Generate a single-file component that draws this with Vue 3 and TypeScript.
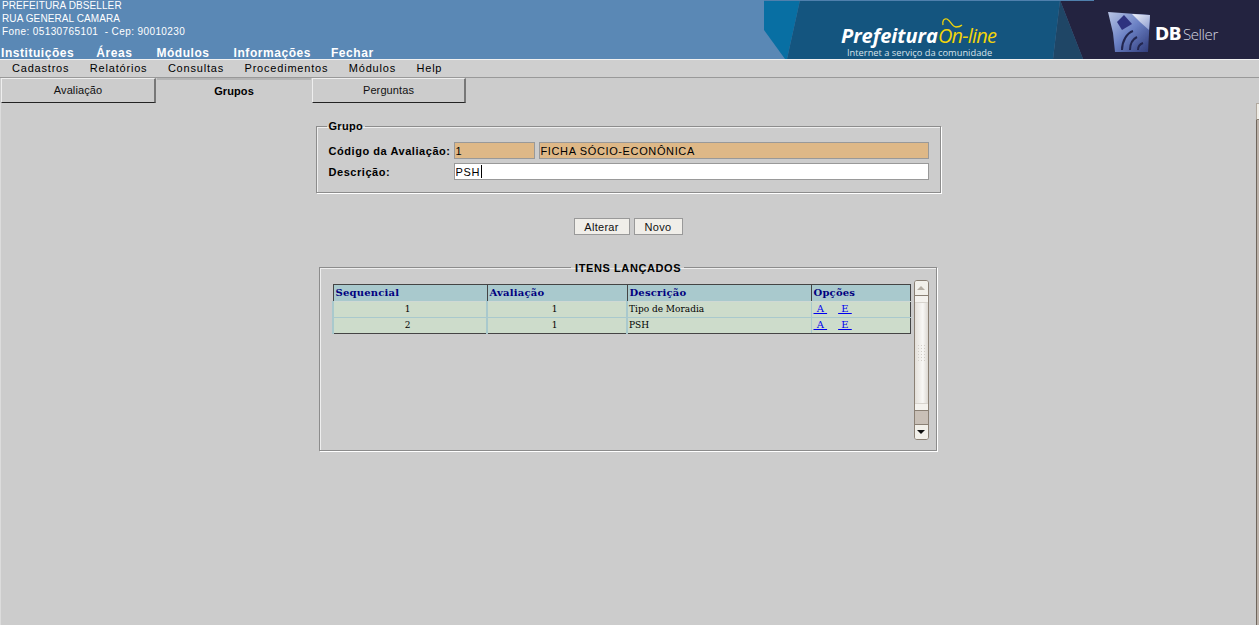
<template>
  <div class="page">
    <!-- Cabecalho -->
    <header class="topo">
      <div class="topo-info">
        <div class="dados">
          <div v-for="linha in dadosPrefeitura" :key="linha">{{ linha }}</div>
        </div>
        <nav class="nav-principal">
          <a v-for="item in navPrincipal" :key="item">{{ item }}</a>
        </nav>
      </div>
      <svg class="banner" viewBox="0 0 495 59" width="495" height="59">
        <defs>
          <linearGradient id="cubo" x1="0" y1="0" x2="1" y2="1">
            <stop offset="0" stop-color="#b9c6e6" />
            <stop offset="0.5" stop-color="#6a80c4" />
            <stop offset="1" stop-color="#2f3a78" />
          </linearGradient>
          <linearGradient id="brilho" x1="0" y1="0" x2="1" y2="1">
            <stop offset="0" stop-color="#f2f4fa" />
            <stop offset="1" stop-color="#8b9bd0" />
          </linearGradient>
          <filter id="suave"><feGaussianBlur stdDeviation="0.6" /></filter>
        </defs>
        <polygon points="0,0 36,0 23,59 21,59 0,30" fill="#086fa3" />
        <polygon points="36,0 296,0 289,59 23,59" fill="#14557f" />
        <polygon points="296,0 319,59 289,59" fill="#1f4666" />
        <polygon points="296,0 495,0 495,59 319,59" fill="#232340" />
        <rect x="0" y="0" width="330" height="1" fill="#4f80ad" />
        <text x="77" y="43" class="b-pref">Prefeitura</text>
        <text x="174" y="43" class="b-online">On-line</text>
        <path d="M179 25C178 21 180 18 183 19C187 21 188 27 192 27C195 27 197 26 198 25" fill="none" stroke="#f2d40a" stroke-width="1.3" />
        <text x="83" y="56" class="b-sub">Internet a serviço da comunidade</text>
        <g filter="url(#suave)">
          <polygon points="344,12 386,15 384,52 351,52 349,33" fill="url(#cubo)" />
          <polygon points="368,14 386,15 385,30 376,22" fill="url(#brilho)" />
          <polygon points="353,22 360,15 368,24 358,30" fill="#2f3180" />
          <path d="M358 50c0-9 5-17 11-19M366 50c0-7 3-11 7-13M374 50c0-4 2-6 5-7" fill="none" stroke="#23264f" stroke-width="2" />
        </g>
        <text x="391" y="40" class="b-db">DB</text>
        <text x="419" y="40" class="b-seller">Seller</text>
      </svg>
    </header>

    <!-- Menu -->
    <nav class="menu">
      <a v-for="item in menu" :key="item">{{ item }}</a>
    </nav>

    <!-- Abas -->
    <div class="abas">
      <button
        v-for="aba in abas"
        :key="aba"
        class="aba"
        :class="{ ativa: aba === abaAtiva }"
      >
        {{ aba }}
      </button>
    </div>

    <main class="conteudo">
      <fieldset class="grupo">
        <legend>Grupo</legend>
        <div class="linha">
          <label>Código da Avaliação:</label>
          <input class="campo leitura codigo" type="text" readonly value="1" />
          <input class="campo leitura nome" type="text" readonly value="FICHA SÓCIO-ECONÔNICA" />
        </div>
        <div class="linha">
          <label>Descrição:</label>
          <div class="campo-cursor">
            <input class="campo descricao" type="text" value="PSH" />
            <span class="cursor"></span>
          </div>
        </div>
      </fieldset>

      <div class="acoes">
        <button class="botao alterar">Alterar</button>
        <button class="botao novo">Novo</button>
      </div>

      <fieldset class="itens">
        <legend>ITENS LANÇADOS</legend>
        <div class="lista">
          <table>
            <colgroup>
              <col class="c-seq" />
              <col class="c-ava" />
              <col class="c-des" />
              <col class="c-opc" />
            </colgroup>
            <thead>
              <tr>
                <th>Sequencial</th>
                <th>Avaliação</th>
                <th>Descrição</th>
                <th>Opções</th>
              </tr>
            </thead>
            <tbody>
              <tr v-for="item in itens" :key="item.seq">
                <td class="centro">{{ item.seq }}</td>
                <td class="centro">{{ item.avaliacao }}</td>
                <td>{{ item.descricao }}</td>
                <td class="opcoes">
                  <a href="#">&nbsp;A&nbsp;</a>
                  <a href="#">&nbsp;E&nbsp;</a>
                </td>
              </tr>
            </tbody>
          </table>
          <div class="scroll">
            <div class="seta cima"><i></i></div>
            <div class="trilho">
              <div class="grip"></div>
            </div>
            <div class="resto"></div>
            <div class="seta baixo"><i></i></div>
          </div>
        </div>
      </fieldset>

      <!-- Barra de rolagem da pagina, cortada na borda direita -->
      <div class="barra-externa"><span></span></div>
    </main>
  </div>
</template>

<script setup lang="ts">
const dadosPrefeitura = [
  'PREFEITURA DBSELLER',
  'RUA GENERAL CAMARA',
  'Fone: 05130765101  - Cep: 90010230',
]
const navPrincipal = ['Instituições', 'Áreas', 'Módulos', 'Informações', 'Fechar']
const menu = ['Cadastros', 'Relatórios', 'Consultas', 'Procedimentos', 'Módulos', 'Help']
const abas = ['Avaliação', 'Grupos', 'Perguntas']
const abaAtiva = 'Grupos'
const itens = [
  { seq: 1, avaliacao: 1, descricao: 'Tipo de Moradia' },
  { seq: 2, avaliacao: 1, descricao: 'PSH' },
]
</script>

<style>
html,
body {
  background: #cccccc;
  overflow: hidden;
}
</style>

<style scoped>
.page {
  width: 1259px;
  height: 625px;
  background: #cccccc;
  font-family: "Liberation Sans", Arial, sans-serif;
  color: #000;
  overflow: hidden;
}

.topo {
  display: flex;
  justify-content: space-between;
  height: 59px;
  background: #5a88b5;
}

.topo-info {
  display: flex;
  flex-direction: column;
  justify-content: space-between;
  padding: 0 0 0 1px;
}

.dados {
  margin-top: -1px;
  padding-left: 1px;
  font-size: 10px;
  line-height: 13px;
  letter-spacing: 0.1px;
  color: #fff;
  white-space: pre;
}

.dados div:last-child {
  letter-spacing: 0.4px;
}

.nav-principal {
  display: flex;
  gap: 24px;
  margin-bottom: -1px;
  font-size: 12px;
  font-weight: 700;
  line-height: 14px;
  letter-spacing: 0.55px;
  color: #fff;
}

.nav-principal a:first-child {
  margin-right: -2px;
}

.nav-principal a:last-child {
  margin-left: -4px;
}

.banner {
  display: block;
  flex: none;
}

.b-pref {
  font-family: "Open Sans", sans-serif;
  font-size: 20px;
  font-weight: 700;
  font-style: italic;
  fill: #fff;
}

.b-online {
  font-family: "Open Sans", sans-serif;
  font-size: 20px;
  font-style: italic;
  letter-spacing: -0.8px;
  fill: #f2d40a;
}

.b-sub {
  font-family: "Open Sans", sans-serif;
  font-size: 9.3px;
  fill: #d6e2ea;
}

.b-db {
  font-family: "DejaVu Sans", sans-serif;
  font-size: 17px;
  font-weight: 700;
  letter-spacing: -0.3px;
  fill: #fff;
}

.b-seller {
  font-family: "Open Sans", sans-serif;
  font-size: 15px;
  font-weight: 300;
  letter-spacing: -0.4px;
  fill: #d5d7e0;
}

.menu {
  display: flex;
  gap: 20.5px;
  height: 19px;
  padding-left: 12px;
  box-sizing: border-box;
  background: #cfcfcf;
  border-top: 1px solid #f0f0f0;
  border-bottom: 1px solid #999;
  font-size: 11px;
  line-height: 17px;
  letter-spacing: 0.8px;
}

.abas {
  display: flex;
  gap: 1px;
  height: 25px;
  padding-left: 1px;
}

.aba {
  width: 154px;
  height: 25px;
  padding: 0 0 1px;
  background: #cccccc;
  border: none;
  border-top: 1px solid #eee;
  border-left: 1px solid #eee;
  border-right: 2px solid #777;
  border-bottom: 1px solid #222;
  font-family: inherit;
  font-size: 11px;
  letter-spacing: 0.1px;
  color: #111;
}

.aba:first-child {
  width: 155px;
}

.aba.ativa {
  border: none;
  border-top: 2px solid #b5b5b5;
  font-weight: 700;
  color: #000;
}

.conteudo {
  position: relative;
  display: flex;
  flex-direction: column;
  align-items: center;
  box-sizing: border-box;
  height: 522px;
  padding-top: 17px;
  box-shadow: inset 1px 0 0 #dcdcdc;
}

.barra-externa {
  position: absolute;
  top: 0;
  right: 0;
  bottom: 0;
  width: 3px;
  box-sizing: border-box;
  background: #bdb3aa;
  border-left: 1px solid #6e655c;
}

.barra-externa span {
  display: block;
  height: 15px;
  margin-left: -1px;
  background: #efece5;
  border-top: 1px solid #b0a89e;
  border-left: 1px solid #b0a89e;
  border-bottom: 1px solid #8a8074;
}

fieldset {
  margin: 0;
  box-sizing: border-box;
  border: 1px solid #8c8c8c;
  box-shadow: 1px 1px 0 #fff, inset 1px 1px 0 #eee;
}

legend {
  font-size: 11px;
  font-weight: 700;
  line-height: 12px;
}

.grupo {
  width: 625px;
  height: 73px;
  padding: 8px 11px 0 12px;
  margin-left: -3px;
}

.grupo legend {
  margin-left: -2px;
  padding: 0 2px;
  letter-spacing: 0.3px;
}

.linha {
  display: flex;
  align-items: center;
  height: 21px;
  gap: 4px;
}

.linha label {
  width: 121px;
  flex: none;
  font-size: 11px;
  font-weight: 700;
  letter-spacing: 0.55px;
  white-space: nowrap;
}

.campo {
  display: block;
  box-sizing: border-box;
  height: 17px;
  margin: 0;
  padding: 1px 1px 0;
  border: 1px solid #999;
  border-radius: 0;
  outline: none;
  font-family: inherit;
  font-size: 11px;
  letter-spacing: 0.63px;
  color: #000;
}

.leitura {
  background: #deb887;
}

.codigo {
  width: 81px;
}

.nome {
  width: 390px;
}

.campo-cursor {
  position: relative;
}

.descricao {
  width: 475px;
  background: #fff;
}

.cursor {
  position: absolute;
  left: 27px;
  top: 2px;
  width: 1px;
  height: 13px;
  background: #000;
}

.acoes {
  display: flex;
  gap: 4px;
  margin-top: 25px;
  margin-left: -3px;
}

.botao {
  height: 17px;
  padding: 0;
  background: #f0eee9;
  border: 1px solid #999;
  font-family: inherit;
  font-size: 11px;
  letter-spacing: 0.3px;
  color: #111;
}

.alterar {
  width: 56px;
}

.novo {
  width: 49px;
}

.itens {
  width: 618px;
  height: 191px;
  margin-top: 25px;
  margin-left: -3px;
  padding: 0 7px 0 12px;
}

.itens legend {
  margin-left: 239px;
  padding: 2px 3px 0 4px;
  letter-spacing: 0.6px;
}

.lista {
  display: flex;
  align-items: flex-start;
  gap: 3px;
  margin-top: 6px;
  text-align: left;
}

table {
  width: 577px;
  margin-top: 4px;
  table-layout: fixed;
  border-collapse: collapse;
  font-family: "DejaVu Serif", serif;
  font-size: 9px;
}

.c-seq {
  width: 154px;
}

.c-ava {
  width: 140px;
}

.c-des {
  width: 184px;
}

.c-opc {
  width: 99px;
}

th {
  height: 17px;
  padding: 0 2px 2px;
  box-sizing: border-box;
  background: #a9c9cd;
  border-top: 1px solid #444;
  border-left: 1px solid #444;
  border-bottom: 1px solid #cfd9d4;
  color: #00007f;
  font-size: 10px;
  font-weight: 700;
  letter-spacing: 0.2px;
  text-align: left;
}

th:last-child {
  border-right: 1px solid #444;
}

td {
  height: 16px;
  padding: 0 1px 2px;
  box-sizing: border-box;
  background: #cddccb;
  border-left: 2px solid #a9c9cd;
  border-right: 1px solid #a9c9cd;
  border-bottom: 1px solid #a9c9cd;
  white-space: nowrap;
}

tbody tr:last-child td {
  border-bottom: 1px solid #444;
}

.centro {
  padding-right: 6px;
  text-align: center;
}

.opcoes {
  padding-left: 2px;
  border-top: 1px solid #444;
  border-left: 1px solid #444;
  border-right: 1px solid #444;
}

.opcoes a {
  margin-right: 11px;
  color: #0000ee;
  font-size: 10px;
}

.scroll {
  display: flex;
  flex-direction: column;
  flex: none;
  width: 15px;
  height: 160px;
  box-sizing: border-box;
  border: 1px solid #8a8074;
  border-radius: 3px;
  background: #f4f2ee;
  overflow: hidden;
}

.seta {
  flex: none;
  display: flex;
  align-items: center;
  justify-content: center;
  height: 14px;
  background: #f2f0ea;
}

.seta i {
  display: block;
  width: 0;
  height: 0;
  border-left: 4px solid transparent;
  border-right: 4px solid transparent;
}

.cima i {
  border-bottom: 4px solid #b5aea3;
}

.baixo i {
  border-top: 4px solid #111;
}

.trilho {
  flex: 1;
  display: flex;
  align-items: center;
  justify-content: center;
  background: linear-gradient(90deg, #e4e0da, #f8f7f5 60%, #dcd8d2);
  border-top: 1px solid #8a8074;
  box-shadow: inset 0 6px 0 #f4f2ee, inset 0 7px 0 #d8d4ce, inset 0 -6px 0 #f4f2ee, inset 0 -7px 0 #d8d4ce;
}

.grip {
  width: 9px;
  height: 18px;
  background-image: radial-gradient(circle, #d2cec8 1px, transparent 1px);
  background-size: 3px 3px;
}

.resto {
  flex: none;
  height: 13px;
  background: #c9c0b7;
  border-top: 1px solid #8a8074;
  border-bottom: 1px solid #8a8074;
}
</style>
